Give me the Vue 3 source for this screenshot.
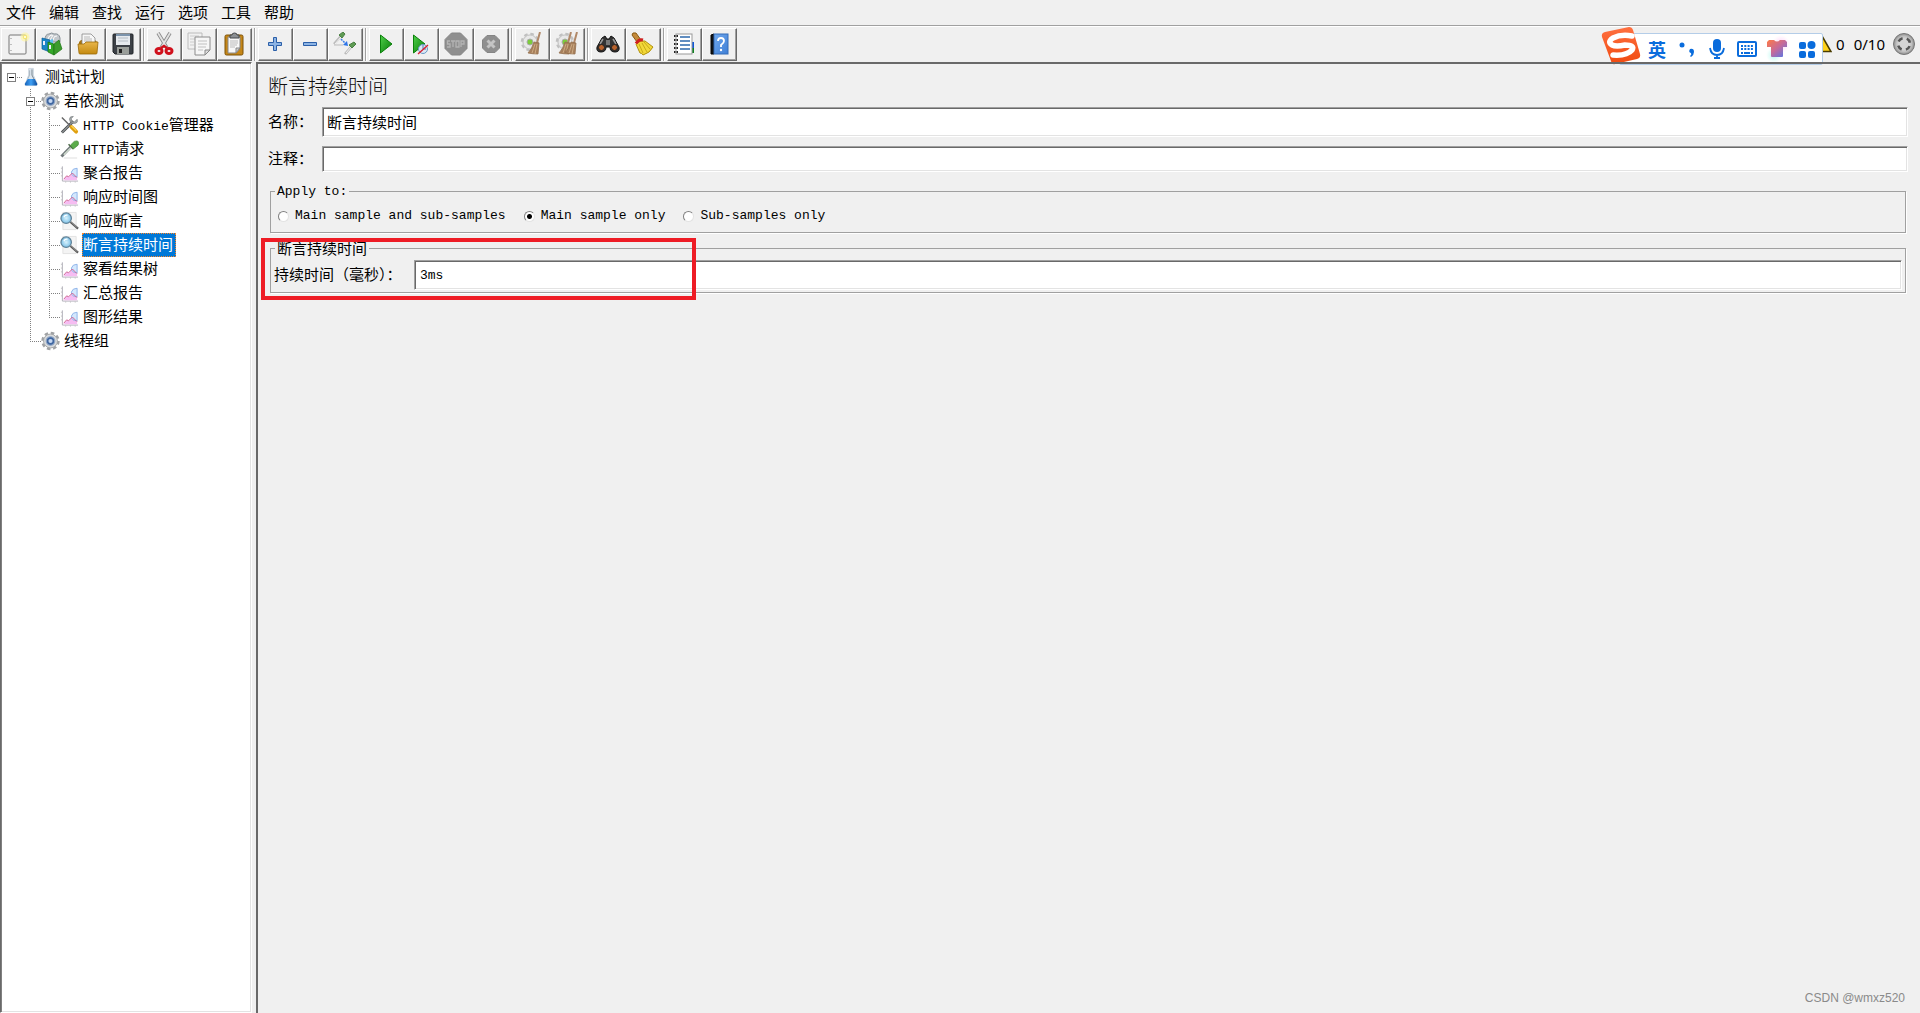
<script setup>
import { ref } from 'vue'

const menus = ['文件', '编辑', '查找', '运行', '选项', '工具', '帮助']

const groups = [
  [['new', '新建'], ['templates', '模板'], ['open', '打开'], ['save', '保存']],
  [['cut', '剪切'], ['copy', '复制'], ['paste', '粘贴']],
  [['plus', '展开'], ['minus', '折叠'], ['toggle', '切换']],
  [['play', '启动'], ['playnow', '不停顿开始'], ['stop', '停止'], ['shutdown', '关闭']],
  [['clear', '清除'], ['clearall', '清除全部']],
  [['find', '搜索'], ['broom', '重置搜索']],
  [['list', '函数助手'], ['help', '帮助']],
]

/* guides: one entry per indent column; u = line up, d = line down, r = line right, b = expander box */
const nodes = [
  { guides: ['rb'], icon: 'flask', cjk: '测试计划' },
  { guides: ['', 'udrb'], icon: 'gear', cjk: '若依测试' },
  { guides: ['', 'ud', 'udr'], icon: 'tools', latin: 'HTTP Cookie', cjk: '管理器' },
  { guides: ['', 'ud', 'udr'], icon: 'pipette', latin: 'HTTP', cjk: '请求' },
  { guides: ['', 'ud', 'udr'], icon: 'chart', cjk: '聚合报告' },
  { guides: ['', 'ud', 'udr'], icon: 'chart', cjk: '响应时间图' },
  { guides: ['', 'ud', 'udr'], icon: 'lens', cjk: '响应断言' },
  { guides: ['', 'ud', 'udr'], icon: 'lens', cjk: '断言持续时间' },
  { guides: ['', 'ud', 'udr'], icon: 'chart', cjk: '察看结果树' },
  { guides: ['', 'ud', 'udr'], icon: 'chart', cjk: '汇总报告' },
  { guides: ['', 'ud', 'ur'], icon: 'chart', cjk: '图形结果' },
  { guides: ['', 'ur'], icon: 'gear', cjk: '线程组' },
]
const selected = ref(7)

const scopes = ['Main sample and sub-samples', 'Main sample only', 'Sub-samples only']
const scope = ref(scopes[1])
const name = ref('断言持续时间')
const comment = ref('')
const duration = ref('3ms')
</script>

<template>
  <div class="app">
    <svg class="defs" width="0" height="0" aria-hidden="true">
      <defs>
        <linearGradient id="gGreen" x1="0" y1="0" x2="1" y2="1"><stop offset="0" stop-color="#4fd04a" /><stop offset="1" stop-color="#067a06" /></linearGradient>
        <linearGradient id="gGold" x1="0" y1="0" x2="0" y2="1"><stop offset="0" stop-color="#e9b64a" /><stop offset="1" stop-color="#c48a10" /></linearGradient>
        <linearGradient id="gBlue" x1="0" y1="0" x2="1" y2="1"><stop offset="0" stop-color="#6fa8ee" /><stop offset="1" stop-color="#3f7fd6" /></linearGradient>
        <linearGradient id="gOrange" x1="0" y1="0" x2="0" y2="1"><stop offset="0" stop-color="#ff7040" /><stop offset="1" stop-color="#f04a10" /></linearGradient>
        <linearGradient id="gShirt" x1="0" y1="0" x2="1" y2="1"><stop offset="0" stop-color="#ff7a45" /><stop offset=".5" stop-color="#c56a9a" /><stop offset="1" stop-color="#4a78f0" /></linearGradient>
        <radialGradient id="gGlow"><stop offset="0" stop-color="#ffb8f0" stop-opacity=".8" /><stop offset="1" stop-color="#ffd8f8" stop-opacity="0" /></radialGradient>
        <radialGradient id="gMint"><stop offset="0" stop-color="#a0f0e8" stop-opacity=".8" /><stop offset="1" stop-color="#c0fff4" stop-opacity="0" /></radialGradient>
        <radialGradient id="gLens"><stop offset="0" stop-color="#d8f2fd" /><stop offset="1" stop-color="#7cc0e6" /></radialGradient>
        <radialGradient id="gSteel"><stop offset="0" stop-color="#f4f4f4" /><stop offset=".7" stop-color="#c4c4c4" /><stop offset="1" stop-color="#8e8e8e" /></radialGradient>
        <linearGradient id="gFlask" x1="0" y1="0" x2="1" y2="0"><stop offset="0" stop-color="#1560b8" /><stop offset=".5" stop-color="#3fa0f4" /><stop offset="1" stop-color="#0c4a9c" /></linearGradient>

        <symbol id="i-new" viewBox="0 0 24 24"><rect x="3" y="3" width="17" height="19" rx="1" fill="#f4f4f4" stroke="#777" /><path d="M5 6v1M5 12v1M5 18v1" stroke="#888" /><circle cx="19" cy="5" r="4.500" fill="#fff59a" opacity=".6" /><circle cx="19" cy="5" r="1.800" fill="#fffbd0" stroke="#f4e468" /></symbol>
        <symbol id="i-templates" viewBox="0 0 24 24"><path d="M4 8q0-6 4-6 3-2 5 0 5-1 6 4v4H4z" fill="#c4c8cc" stroke="#8a9298" /><path d="M7 7q1-4 4-4M12 8q1-5 4-4M9 8q2-3 3-5" stroke="#fff" fill="none" /><path d="M1 6l8 2v12l-8-3z" fill="#1d86c8" stroke="#0a5f98" stroke-width=".7" /><path d="M9 8l3-1v12l-3 2z" fill="#5fc0ee" /><path d="M7 10l6 2v11l-6-3z" fill="#35a828" stroke="#17750f" stroke-width=".7" /><path d="M13 12l5-4 3 9-8 6z" fill="#3c9c2c" stroke="#1c7414" stroke-width=".7" /><path d="M3 9v4M9 13v4" stroke="#eef" stroke-width="2" /></symbol>
        <symbol id="i-open" viewBox="0 0 24 24"><path d="M3 10l2-2h14l2 2v8H3z" fill="#a87510" /><path d="M6 2h9l4 4v8H6z" fill="#f7f7f7" stroke="#888" stroke-width=".8" /><path d="M8 5h6M8 7h8M8 9h8" stroke="#aaa" stroke-width=".8" /><path d="M2 12h6l2-2h12l-1 11q0 1-1 1H4q-1 0-1-1z" fill="url(#gGold)" stroke="#9a6a08" stroke-width=".8" /></symbol>
        <symbol id="i-save" viewBox="0 0 24 24"><path d="M2 3q0-1 1-1h18q1 0 1 1v18q0 1-1 1H4l-2-2z" fill="#3c4046" stroke="#202428" /><rect x="5" y="2" width="14" height="11" fill="#e6eaee" /><path d="M5 3h14" stroke="#7c94ac" stroke-width="2" /><path d="M7 6h10M7 9h10" stroke="#b4bcc4" /><rect x="6" y="15" width="12" height="7" fill="#9a9e9a" /><rect x="8" y="17" width="3" height="4" fill="#222" /></symbol>
        <symbol id="i-cut" viewBox="0 0 24 24"><path d="M6 1l9 15M18 1L9 16" stroke="#8a8a8a" stroke-width="3.500" /><path d="M6 1l9 15M18 1L9 16" stroke="#e2e2e2" stroke-width="1.800" /><ellipse cx="7" cy="19" rx="3" ry="2.500" fill="#f4f0f0" stroke="#d0101c" stroke-width="3" /><ellipse cx="17" cy="19" rx="3" ry="2.500" fill="#f4f0f0" stroke="#d0101c" stroke-width="3" /><path d="M9 16l3-2 3 2" fill="none" stroke="#d0101c" stroke-width="2.500" /></symbol>
        <symbol id="i-copy" viewBox="0 0 24 24"><path d="M1 1h14v16H1z" fill="#f1f1f1" stroke="#bcbcbc" /><path d="M3 4h9M3 7h5M3 10h4M3 13h4" stroke="#ccc" /><path d="M8 5h15v13l-5 5H8z" fill="#f6f6f6" stroke="#8c8c8c" /><path d="M11 9h9M11 12h9M11 15h8M11 18h5" stroke="#c0c0c0" /><path d="M18 23v-5h5z" fill="#ddd" stroke="#888" /></symbol>
        <symbol id="i-paste" viewBox="0 0 24 24"><rect x="3" y="3" width="18" height="20" rx="1.500" fill="#c58617" stroke="#7c5208" /><path d="M6 5h12v11l-4 5H6z" fill="#f8f8f8" stroke="#888" /><path d="M8 9h8M8 11h8M8 13h7M8 15h5" stroke="#bbb" /><path d="M18 16h-4v5z" fill="#ccc" stroke="#888" /><path d="M8 6V3h2q0-2 2.500-2T15 3h2v3z" fill="#8c9094" stroke="#44484c" /></symbol>
        <symbol id="i-plus" viewBox="0 0 24 24"><path d="M10.500 5.500h3v5h5v3h-5v5h-3v-5h-5v-3h5z" fill="#8db4e4" stroke="#2b5fa8" /></symbol>
        <symbol id="i-minus" viewBox="0 0 24 24"><path d="M5.500 10.500h13v3h-13z" fill="#8db4e4" stroke="#2b5fa8" /></symbol>
        <symbol id="i-toggle" viewBox="0 0 24 24"><path d="M1 12l7-8M12 22l6-7" stroke="#bcbcbc" stroke-width="2.600" /><path d="M2 12l6-7M13 21l5-6" stroke="#f4f4f4" stroke-width="1" /><path d="M6 3l3 3 3-4-2-2zM16 13l3 3 4-4-2-2z" fill="#5f9c54" stroke="#4a8044" stroke-width="1" /><path d="M1 13h9" stroke="#bbb" /><path d="M8 7l5 5" stroke="#3a7de8" stroke-width="1.500" stroke-dasharray="2 1" /><path d="M15 14l-5-1 4-4z" fill="#2f76e8" /></symbol>
        <symbol id="i-play" viewBox="0 0 24 24"><path d="M6.500 3v18L18 12z" fill="url(#gGreen)" stroke="#0a800a" /></symbol>
        <symbol id="i-playnow" viewBox="0 0 24 24"><path d="M4.500 3v18L16 12z" fill="url(#gGreen)" stroke="#0a800a" /><circle cx="14" cy="17" r="4.500" fill="#dce8f4" stroke="#6a9ac8" /><path d="M14 13v4h3" fill="none" stroke="#4a7ab0" /><path d="M9 22l10-9" stroke="#d82030" stroke-width="1.400" /></symbol>
        <symbol id="i-stop" viewBox="0 0 24 24"><path d="M7.500 1h9L23 7.500v9L16.500 23h-9L1 16.500v-9z" fill="#8f8f8f" stroke="#868686" /><path d="M6 9H3.500v3H6v3H3M7 9h4M9 9v6M12 9h3v6h-3zM17 15V9h3v3h-3" fill="none" stroke="#b4b4b4" stroke-width="1.300" /></symbol>
        <symbol id="i-shutdown" viewBox="0 0 24 24"><path d="M8 3.500h8l4.500 4.500v8L16 20.500H8L3.500 16V8z" fill="#8f8f8f" stroke="#858585" /><path d="M8.500 8.500l7 7M15.500 8.500l-7 7" stroke="#c4c4c4" stroke-width="3" /></symbol>
        <symbol id="i-cog" viewBox="0 0 24 24"><circle cx="10" cy="10" r="8" fill="#e6e6e6" stroke="#c0c0c0" stroke-width="2.500" stroke-dasharray="3.500 2.800" /><circle cx="10" cy="10" r="7" fill="#e8e8e8" stroke="#c4c4c4" /><circle cx="10" cy="10" r="3" fill="#7ccc3c" stroke="#aaa" /></symbol>
        <symbol id="i-besom" viewBox="0 0 24 24"><path d="M20 0l-3 11" stroke="#b08868" stroke-width="2" /><path d="M14 10l5 1-1 11q-5 0-10-1 4-4 6-11z" fill="#a8805c" stroke="#94704e" stroke-width=".8" /><path d="M15 12l-3 9M17 12l-2 10" stroke="#d4b48c" stroke-width=".8" /></symbol>
        <symbol id="i-clear" viewBox="0 0 24 24"><use href="#i-cog" /><use href="#i-besom" /></symbol>
        <symbol id="i-clearall" viewBox="0 0 24 24"><use href="#i-cog" /><use href="#i-besom" x="-4" /><use href="#i-besom" x="2" /></symbol>
        <symbol id="i-find" viewBox="0 0 24 24"><path d="M6 6l3-2 2 3h2l2-3 3 2 5 9q1 5-4 5-5 0-5-5h-4q0 5-5 5-5 0-4-5z" fill="#333" stroke="#111" /><path d="M7 7L4 12M17 7l3 5" stroke="#999" stroke-width="1.500" /><circle cx="5.500" cy="15.500" r="3" fill="#b8622c" stroke="#222" /><circle cx="18.500" cy="15.500" r="3" fill="#b8622c" stroke="#222" /><rect x="10" y="8" width="4" height="5" fill="#777" /></symbol>
        <symbol id="i-broom" viewBox="0 0 24 24"><path d="M1 3q0-3 4-2l5 7-4 2z" fill="#c48a3a" stroke="#8a5a14" /><path d="M5 12q4-4 9-3l8 6q-3 6-10 8-1-2-3-2-2-4-4-9z" fill="#f2d838" stroke="#b09010" /><path d="M8 12l4 9M11 11l5 9M13 10l6 7" stroke="#c8aa18" /><path d="M5 11.500Q8 7 12 8" fill="none" stroke="#d02020" stroke-width="3" /></symbol>
        <symbol id="i-list" viewBox="0 0 24 24"><rect x="17" y="10" width="5" height="6" fill="#1058d8" /><rect x="17" y="16" width="5" height="5" fill="#108020" /><rect x="4" y="2" width="16" height="20" fill="#fff" stroke="#999" /><path d="M8 5h10M8 9h10M8 13h10M8 17h10" stroke="#2c68ac" stroke-width="1.500" /><path d="M2 4h4M2 8h4M2 12h4M2 16h4M2 20h4" stroke="#222" stroke-width="2" stroke-dasharray="1.500 1" /></symbol>
        <symbol id="i-help" viewBox="0 0 24 24"><path d="M4 3l3-1v20H4z" fill="#101418" stroke="#000" /><rect x="7" y="2" width="14" height="20" fill="url(#gBlue)" stroke="#356cb8" /><path d="M11 9q0-3 3-3t3 3q0 2-3 4v2" fill="none" stroke="#fff" stroke-width="1.800" /><circle cx="14" cy="18" r="1.200" fill="#fff" /></symbol>

        <symbol id="i-flask" viewBox="0 0 20 20"><path d="M7 1h5v7l4 9q.5 2-1.500 2h-10Q3 19 3.500 17L7 8z" fill="#dde6ee" stroke="#c4d0da" stroke-width=".8" /><path d="M6 12h7.500l2.500 5q.5 2-1.500 2h-10q-2 0-1.500-2z" fill="url(#gFlask)" /><path d="M10.500 2v6l2 4" fill="none" stroke="#76828c" /><path d="M8 3v5l-2 4" fill="none" stroke="#a8b4be" /></symbol>
        <symbol id="i-gear" viewBox="0 0 20 20"><circle cx="10" cy="10" r="8.300" fill="none" stroke="#a0a2a4" stroke-width="2.800" stroke-dasharray="3.700 2.820" /><circle cx="10" cy="10" r="7.300" fill="#d8dadb" stroke="#a4a6a8" /><circle cx="10" cy="10" r="4.500" fill="#3f66a0" stroke="#8ea4c4" stroke-width="1.200" /><circle cx="10" cy="10" r="2.200" fill="#c4d6f0" /></symbol>
        <symbol id="i-tools" viewBox="0 0 20 20"><path d="M2 18L14 6" stroke="#4a4e50" stroke-width="3" /><path d="M2 18L14 6" stroke="#c4c8ca" stroke-width="1" /><path d="M18 4l-3 3-3-1 0-3 2-2q-4-.5-4 3l1 3q3 2 6 1 2-1 1-4z" fill="#aab0b2" stroke="#707476" stroke-width=".7" /><path d="M2 2l10 10" stroke="#666" stroke-width="1.500" /><path d="M12 12l5 5" stroke="#e0a010" stroke-width="4" stroke-linecap="round" /><path d="M12 11l5 5" stroke="#ffd85a" stroke-width="1.200" /></symbol>
        <symbol id="i-pipette" viewBox="0 0 20 20"><path d="M4 19.500h14" stroke="#ddd" /><path d="M1.500 18L12 7" stroke="#70787a" stroke-width="3" /><path d="M4 16l8-8" stroke="#d4e0d2" stroke-width="1.400" /><path d="M9 5l5 5" stroke="#4c6a48" stroke-width="1.600" /><path d="M11 6l4-4q3-1 4 0 1 2 0 4l-5 4z" fill="#5bac4a" stroke="#4a8a3e" stroke-width=".8" /></symbol>
        <symbol id="i-chart" viewBox="0 0 20 20"><path d="M2.500 3v15.500H19" fill="none" stroke="#b0aeb8" /><path d="M1 5h1M1 9h1M1 13h1M6 19v1M11 19v1M16 19v1" stroke="#bbb" /><path d="M4 17.500l3-4 2 1 4-4 5 5v2z" fill="#f6bcf2" /><path d="M18 5q-5 0-6 4 0 5 6 5z" fill="#d4e8fe" stroke="#8cb2e8" /><path d="M4 16.500L7 13l2 1 4-4 5 5" fill="none" stroke="#cc5c90" stroke-width="1" /></symbol>
        <symbol id="i-lens" viewBox="0 0 20 20"><path d="M3 1h14v18H3z" fill="#f4f4f4" stroke="#e2e2e2" /><path d="M11 11l8 7" stroke="#555" stroke-width="2.200" /><path d="M12 11l6 6" stroke="#bbb" stroke-width=".8" /><circle cx="6.500" cy="7" r="5.500" fill="url(#gLens)" stroke="#5f8298" stroke-width="1.300" /><path d="M4 6q1-3 4-2" fill="none" stroke="#fff" stroke-width="1.200" /></symbol>
      </defs>
    </svg>

    <nav class="menubar">
      <a v-for="m in menus" :key="m" href="#">{{ m }}</a>
    </nav>

    <header class="toolbar">
      <div v-for="(g, i) in groups" :key="i" class="group">
        <button v-for="b in g" :key="b[0]" type="button" :aria-label="b[1]">
          <svg width="24" height="24"><use :href="'#i-' + b[0]" /></svg>
        </button>
      </div>
      <div class="status">
        <svg class="warn" width="20" height="18" viewBox="0 0 20 18"><path d="M10 1l9 15.500H1z" fill="#ffd21a" stroke="#4a3c00" stroke-width="1.500" /></svg>
        <span class="errors">0</span>
        <span class="threads">0/10</span>
        <svg width="24" height="24" viewBox="0 0 24 24"><circle cx="12" cy="12" r="10.500" fill="url(#gSteel)" stroke="#777" /><circle cx="12" cy="12" r="6" fill="#d4d4d4" stroke="#555" stroke-width="2.500" stroke-dasharray="5 4.425" stroke-dashoffset="-2.200" /></svg>
      </div>

      <div class="ime">
        <svg class="logo" width="40" height="38" viewBox="0 0 40 38"><path d="M4 5L28 0q3 0 4 3l7 24q1 4-3 5L14 37q-3 1-4-3L1 10q-1-4 3-5z" fill="url(#gOrange)" /><path d="M31 9Q20 7 12 11q-6 4-1 7 4 2 13 0 10 0 7 5-5 6-19 5" fill="none" stroke="#fff" stroke-width="5.500" stroke-linecap="round" /></svg>
        <span class="lang">英</span>
        <svg width="18" height="20" viewBox="0 0 18 20"><circle cx="4" cy="6" r="2.500" fill="#0a6cdc" /><path d="M12 10q4-1 4 3 0 3-3 5l-1-1q2-1 1-3-3-1-1-4z" fill="#0a6cdc" /></svg>
        <svg width="18" height="20" viewBox="0 0 18 20"><rect x="5" y="0" width="8" height="13" rx="4" fill="#0a6cdc" /><path d="M2 9q1 7 7 7t7-7M9 16v3M6 19h6" fill="none" stroke="#0a6cdc" stroke-width="1.800" /></svg>
        <svg width="20" height="20" viewBox="0 0 20 20"><rect x="1" y="3" width="18" height="14" rx="1" fill="none" stroke="#0a6cdc" stroke-width="2" /><path d="M4 7h12M4 10h12" stroke="#0a6cdc" stroke-width="2" stroke-dasharray="2 1.300" /><path d="M4 14h2M7 14h6M14 14h2" stroke="#0a6cdc" stroke-width="2" /></svg>
        <svg width="26" height="28" viewBox="0 0 26 28"><circle cx="17" cy="9" r="9" fill="url(#gGlow)" /><circle cx="10" cy="20" r="8" fill="url(#gMint)" /><path d="M5 5h5q3 3 6 0h5l2 2v5h-4v9q0 1-1 1H8q-1 0-1-1v-9H3V7z" fill="url(#gShirt)" /></svg>
        <svg width="18" height="20" viewBox="0 0 18 20"><g fill="#0a6cdc"><rect x="1" y="3" width="7" height="7" rx="2" /><circle cx="13.500" cy="6" r="4" /><rect x="1" y="12" width="7" height="7" rx="2" /><rect x="10" y="12" width="7" height="7" rx="2" /></g></svg>
      </div>
    </header>

    <div class="body">
      <aside class="tree">
        <ul>
          <li v-for="(n, i) in nodes" :key="i" @click="selected = i">
            <span v-for="(g, k) in n.guides" :key="k" class="guide">
              <i v-if="g.includes('u')" class="up"></i>
              <i v-if="g.includes('d')" class="down"></i>
              <i v-if="g.includes('r')" class="right"></i>
              <i v-if="g.includes('b')" class="box"></i>
            </span>
            <svg width="19" height="20"><use :href="'#i-' + n.icon" /></svg>
            <span class="node" :class="{ on: i === selected }"><span v-if="n.latin" class="latin">{{ n.latin }}</span>{{ n.cjk }}</span>
          </li>
        </ul>
      </aside>

      <main class="pane">
        <h1>断言持续时间</h1>
        <div class="row">
          <label for="name">名称：</label>
          <input id="name" v-model="name" class="field" type="text">
        </div>
        <div class="row note">
          <label for="comment">注释：</label>
          <input id="comment" v-model="comment" class="field" type="text">
        </div>

        <fieldset class="apply">
          <legend class="latin">Apply to:</legend>
          <div class="radios latin">
            <label v-for="s in scopes" :key="s"><input v-model="scope" type="radio" name="scope" :value="s">{{ s }}</label>
          </div>
        </fieldset>

        <fieldset class="duration">
          <legend>断言持续时间</legend>
          <div class="limit">
            <label for="duration">持续时间（毫秒）：</label>
            <input id="duration" v-model="duration" class="field latin" type="text">
          </div>
          <div class="marker"></div>
        </fieldset>

        <div class="credit">CSDN @wmxz520</div>
      </main>
    </div>
  </div>
</template>

<style>
body {
  background: #f0f0f0;
}
</style>

<style scoped>
* {
  box-sizing: border-box;
}
.app {
  display: flex;
  flex-direction: column;
  min-height: 100vh;
  background: #f0f0f0;
  color: #000;
  font: 15px/20px "Noto Sans CJK SC", sans-serif;
}
.defs {
  position: absolute;
}
.latin {
  font-family: "Liberation Mono", "Noto Sans CJK SC", monospace;
  font-size: 13px;
}
.menubar {
  display: flex;
  gap: 13px;
  height: 26px;
  padding: 2px 6px 0;
  border-bottom: 1px solid #a0a0a0;
}
.menubar a {
  color: #000;
  text-decoration: none;
}
.toolbar {
  position: relative;
  display: flex;
  height: 36px;
  padding: 1px 4px 1px 1px;
  border-top: 1px solid #fff;
}
.group {
  display: flex;
}
.group + .group {
  margin-left: 2px;
  padding-left: 3px;
  border-left: 1px solid #a0a0a0;
  box-shadow: inset 1px 0 #fff;
}
.group button {
  display: grid;
  place-items: center;
  width: 35px;
  height: 33px;
  padding: 0 2px 2px 0;
  background: #f0f0f0;
  border: 1px solid;
  border-color: #fff #696969 #696969 #fff;
  box-shadow: inset -1px -1px #a0a0a0;
}
.status {
  display: flex;
  align-items: center;
  height: 32px;
  margin-left: auto;
  font: 15px/20px "Noto Sans", sans-serif;
}
.errors {
  margin: 0 9px 0 4px;
}
.threads {
  margin-right: 7px;
}
.ime {
  position: absolute;
  top: 6px;
  right: 97px;
  display: grid;
  grid-template-columns: repeat(6, 30px);
  place-items: center;
  height: 32px;
  padding-left: 22px;
  background: #fff;
  border: 1px solid #b4cde8;
  border-radius: 2px;
}
.ime .logo {
  position: absolute;
  left: -19px;
  top: -7px;
}
.lang {
  color: #0a6cdc;
  font-size: 18px;
  font-weight: 700;
}
.body {
  display: flex;
  flex: 1;
  gap: 4px;
}
.tree {
  width: 252px;
  padding: 1px 0 0 1px;
  background: #fff;
  border: 1px solid;
  border-color: #696969 #fff #fff #696969;
  box-shadow: inset 1px 1px #808080, inset -1px -1px #e3e3e3;
}
.tree ul {
  margin: 0;
  padding: 1px 0 0 1px;
  list-style: none;
}
.tree li {
  display: flex;
  align-items: center;
  height: 24px;
}
.guide {
  position: relative;
  width: 19px;
  height: 24px;
}
.guide i {
  position: absolute;
}
.up,
.down {
  left: 8px;
  width: 1px;
  height: 12px;
  background: repeating-linear-gradient(#808080 0 1px, #fff 1px 2px);
}
.up {
  top: 0;
}
.down {
  top: 12px;
}
.right {
  left: 8px;
  top: 12px;
  width: 11px;
  height: 1px;
  background: repeating-linear-gradient(90deg, #808080 0 1px, #fff 1px 2px);
}
.box {
  left: 4px;
  top: 8px;
  width: 9px;
  height: 9px;
  background: linear-gradient(#000, #000) center / 5px 1px no-repeat #fff;
  border: 1px solid #808080;
}
.node {
  height: 24px;
  margin-left: 3px;
  padding: 0 1px;
  border: 1px solid transparent;
  border-width: 1px 0;
  white-space: nowrap;
}
.node.on {
  background: #0078d7;
  color: #fff;
  outline: 1px dotted #ff8728;
  outline-offset: -1px;
  padding-right: 3px;
}
.pane {
  position: relative;
  flex: 1;
  min-width: 0;
  padding: 10px 12px 40px 10px;
  border-top: 2px solid #696969;
  border-left: 2px solid #696969;
}
h1 {
  margin: 0 0 9px;
  color: #111;
  font-size: 20px;
  line-height: 24px;
  font-weight: 300;
}
.row {
  display: flex;
  align-items: center;
}
.row label {
  width: 54px;
  padding-bottom: 2px;
}
.field {
  flex: 1;
  min-width: 0;
  height: 30px;
  padding: 0 4px 2px;
  background: #fff;
  color: #000;
  font-family: "Noto Sans CJK SC", sans-serif;
  font-size: 15px;
  border: 1px solid;
  border-color: #a0a0a0 #fff #fff #a0a0a0;
  border-radius: 0;
  box-shadow: inset 1px 1px #696969, inset -1px -1px #e3e3e3;
  outline: none;
}
.field.latin {
  padding: 0 5px;
  font-family: "Liberation Mono", monospace;
  font-size: 13px;
}
.note {
  margin-top: 9px;
}
.note .field {
  height: 26px;
}
fieldset {
  margin: 0 2px;
  padding: 0 3px 2px;
  border: 1px solid #a0a0a0;
  box-shadow: 1px 1px #fff;
}
legend {
  margin-left: 1px;
  padding: 0 2px;
  line-height: 16px;
  background: #f0f0f0;
}
.apply {
  margin-top: 11px;
}
.apply legend {
  padding-top: 1px;
  line-height: 15px;
}
.radios {
  display: flex;
  gap: 18px;
  height: 31px;
  padding: 7px 4px 0;
}
.radios label {
  display: flex;
  align-items: center;
  gap: 6px;
  height: 20px;
}
.radios input {
  appearance: none;
  width: 11px;
  height: 11px;
  margin: 0;
  background: #fff;
  border: 1px solid;
  border-color: #808080 #e3e3e3 #e3e3e3 #808080;
  border-radius: 50%;
}
.radios input:checked {
  background: radial-gradient(circle, #000 0 2px, #fff 3px);
}
.duration {
  position: relative;
  margin-top: 7px;
}
.limit {
  display: flex;
  align-items: center;
  padding-top: 4px;
}
.limit label {
  width: 140px;
  padding-bottom: 2px;
}
.marker {
  position: absolute;
  left: -10px;
  top: -18px;
  width: 435px;
  height: 62px;
  border: 4px solid #ee1c25;
  pointer-events: none;
}
.credit {
  position: absolute;
  right: 15px;
  bottom: 5px;
  color: #8a8a8a;
  font: 12px/20px "Liberation Sans", sans-serif;
}
</style>
